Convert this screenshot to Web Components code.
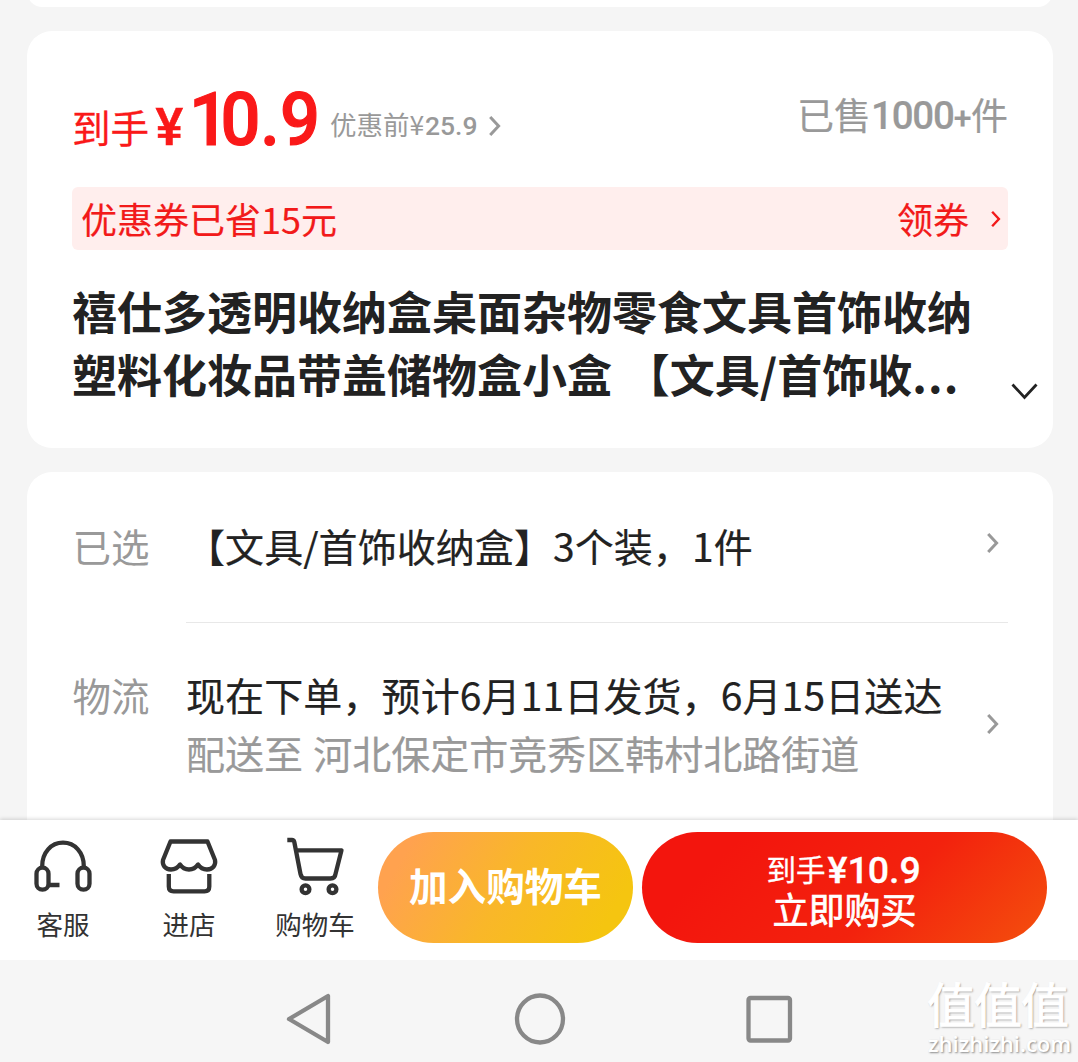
<!DOCTYPE html>
<html lang="zh-CN">
<head>
<meta charset="utf-8">
<title>商品详情</title>
<style>
html,body{margin:0;padding:0}
body{width:1078px;height:1062px;overflow:hidden;background:#f5f5f5;font-family:"Noto Sans CJK SC","Noto Sans",sans-serif;color:#222}
</style>
</head>
<body>
<product-page></product-page>
<script>
const define=(name,html)=>{
  const t=document.createElement('template');
  t.innerHTML=html;
  customElements.define(name,class extends HTMLElement{
    constructor(){super();this.attachShadow({mode:'open'}).append(t.content.cloneNode(true));}
  });
};

define('chevron-icon',`<style>
:host{display:block;width:12px;height:20px;color:#999}
svg{display:block;width:100%;height:100%;overflow:visible}
</style><svg viewBox="0 0 12 20" fill="none" stroke="currentColor" stroke-width="3"><path d="M1.2 1 9.600 10 1.200 19"/></svg>`);

define('info-card',`<style>
:host{display:block;box-sizing:border-box;background:#fff;border-radius:25px;margin:0 25px 0 27px;padding:0 45px}
</style><slot></slot>`);

define('price-row',`<style>
:host{display:flex;height:156px;align-items:flex-start;white-space:nowrap;color:#fa1919}
span{display:block;flex:none}
.label{font-size:38.5px;line-height:50px;margin-top:70px;width:83.500px;-webkit-text-stroke:.3px}
.n{font-family:Roboto,sans-serif}
.yen{font-size:52px;line-height:60px;font-weight:500;margin-top:67px;width:33.500px;-webkit-text-stroke:.6px}
.big{font-size:74px;line-height:80px;font-weight:500;margin-top:49px;width:141px;transform:scaleX(.95);transform-origin:0 0;-webkit-text-stroke:1.200px}
.big i{font-style:normal;letter-spacing:-9px}
.was{font-size:26.5px;line-height:40px;color:#999;margin-top:73px;width:95px}
.wasn{font-size:26.500px;line-height:40px;color:#999;font-weight:500;margin-top:75px;width:64px}
chevron-icon{margin-top:85px}
.sold{display:flex;margin-left:auto;color:#999;font-size:37px;line-height:50px;margin-top:58px;-webkit-text-stroke:.2px}
.sold b{font-family:Roboto,sans-serif;font-size:38.500px;font-weight:500;margin-top:2px;letter-spacing:-1.2px}
.sold b i{font-style:normal;font-size:32px;letter-spacing:-.5px}
</style>
<span class="label">到手</span><span class="n yen">¥</span><span class="n big"><i>1</i>0.9</span>
<span class="was">优惠前¥</span><span class="n wasn">25.9</span><chevron-icon></chevron-icon>
<div class="sold"><span>已售</span><b>1000<i>+</i></b><span>件</span></div>`);

define('coupon-banner',`<style>
:host{display:flex;align-items:center;box-sizing:border-box;height:63px;border-radius:6px;background:#ffeeed;color:#f21a1a;font-size:36px;line-height:60px;padding:0 7px 0 9px;-webkit-text-stroke:.2px}
.get{margin-left:auto;width:94px}
chevron-icon{color:#f21a1a;width:10px;height:16px}
.save,.get{margin-top:-2px}
</style><span class="save">优惠券已省15元</span><span class="get">领券</span><chevron-icon></chevron-icon>`);

define('product-title',`<style>
:host{display:flex;height:198px;white-space:nowrap}
.t{font-size:45px;line-height:63px;font-weight:700;padding-top:28.5px;width:939px;flex:none;word-spacing:2.500px}
.t i{font-style:normal;letter-spacing:1.200px}
svg{margin-top:133px;width:28px;height:17px;flex:none}
</style><div class="t">禧仕多透明收纳盒桌面杂物零食文具首饰收纳<br>塑料化妆品带盖储物盒小盒 【文具/首饰收<i>...</i></div>
<svg viewBox="0 0 28 17" fill="none" stroke="#222" stroke-width="2.8"><path d="M1.5 1.5 13.5 14.5 25.5 1.5"/></svg>`);

define('detail-row',`<style>
:host{display:flex;align-items:flex-start;white-space:nowrap;font-size:39px;line-height:58px}
.k{color:#999;font-size:38.5px;box-sizing:border-box;width:114px;padding-left:.5px}
.v{flex:1;box-sizing:border-box;-webkit-text-stroke:.2px}
chevron-icon{margin:var(--cy) 9.500px 0 0}
</style><div class="k"><slot name="label"></slot></div><div class="v"><slot></slot></div><chevron-icon></chevron-icon>`);

define('tool-item',`<style>
:host{display:flex;flex-direction:column;align-items:center;width:126px;font-size:26.5px;line-height:36px;color:#333}
::slotted(svg){display:block;width:64px;height:64px;fill:none;stroke:#333;stroke-width:4.3;stroke-linejoin:round;stroke-linecap:butt;margin-bottom:10px}
</style><slot name="icon"></slot><span><slot></slot></span>`);

define('pill-button',`<style>
:host{display:flex;flex-direction:column;align-items:center;box-sizing:border-box;height:111px;border-radius:56px;color:#fff;white-space:nowrap}
</style><slot></slot>`);

define('action-bar',`<style>
:host{display:flex;position:relative;box-sizing:border-box;height:140px;background:#fff;box-shadow:0 -1px 4px rgba(0,0,0,.16);padding-top:12px}
.cart{width:255px;background:linear-gradient(120deg,#ffa24f 12%,#f9b729 50%,#f5c510 88%);font-size:38.6px;line-height:56px;font-weight:700;padding-top:24px}
.buy{width:405px;margin-left:9px;background:linear-gradient(135deg,#f3150d 20%,#f3220d 60%,#f4500d 100%);font-size:36px;font-weight:400}
.l1{display:flex;height:58px;width:156px;font-size:29.5px;line-height:50px;padding-top:11px;box-sizing:border-box;-webkit-text-stroke:.3px #fff}
.l1 b{font-family:Roboto,sans-serif;font-size:37.5px;font-weight:500;margin-top:2px;margin-left:2px}
.l1 i{font-style:normal;letter-spacing:-1px}
.l2{line-height:40px;-webkit-text-stroke:.7px #fff;margin-top:-2px}
</style>
<tool-item><svg slot="icon" viewBox="0 0 64 64"><g transform="translate(0 7.700)"><path d="M11.2 26.500C11.2 13 20 3 32 3s20.8 10 20.8 23.500"/><rect x="5.5" y="28" width="12" height="22" rx="6"/><rect x="46.5" y="28" width="12" height="22" rx="6"/><path d="M17.5 45.3h11" stroke-width="4.5"/></g></svg>客服</tool-item>
<tool-item><svg slot="icon" viewBox="0 0 64 64"><path d="M13.5 1.5h37L58 20c1 5-2 9.500-8 9.500-4 0-7-2-9-5-2 3-5 5-9 5s-7-2-9-5c-2 3-5 5-9 5-6 0-9-4.500-8-9.500Z" transform="translate(0 8)"/><path d="M11.800 42v12.500q0 4.800 4.800 4.800H47.500q4.800 0 4.800-4.800V42"/></svg>进店</tool-item>
<tool-item><svg slot="icon" viewBox="0 0 64 64"><path d="M4.300 8h4.700q1.800 0 2.300 2L17.500 42q.9 4.500 5 4.500H47.500q4.500 0 5-4.500L58.500 18.300H13"/><circle cx="22.500" cy="57.300" r="3.900"/><circle cx="49.500" cy="57.300" r="3.900"/></svg>购物车</tool-item>
<pill-button class="cart">加入购物车</pill-button>
<pill-button class="buy"><div class="l1">到手<b>¥<i>1</i>0.9</b></div><div class="l2">立即购买</div></pill-button>`);

define('system-nav',`<style>
:host{display:flex;position:relative;height:102px;background:#f6f6f6;align-items:flex-start}
svg{display:block;fill:none;stroke:#888;stroke-width:4.3;stroke-linejoin:round}
.mark{position:absolute;left:927px;top:15px;width:150px;color:#fff;text-shadow:1px 1px 2px #888}
.cn{font-size:48px;line-height:54px;font-weight:400;-webkit-text-stroke:1px #fff;letter-spacing:-1px;white-space:nowrap}
.en{font-family:"Open Sans",sans-serif;font-weight:600;font-size:22px;line-height:26px;margin-top:1px;padding-left:1px;white-space:nowrap}
</style>
<svg width="1078" height="102" viewBox="0 0 1078 102"><path d="M328 36v46L289 59Z"/><ellipse cx="540" cy="59" rx="23" ry="23.500"/><rect x="748.500" y="38" width="41.500" height="42.500" rx="2"/></svg>
<div class="mark"><div class="cn">值值值</div><div class="en">zhizhizhi.com</div></div>`);

define('product-page',`<style>
:host{display:flex;flex-direction:column;width:1078px;height:1062px;overflow:hidden;background:#f5f5f5}
.prev{height:31px;flex:none;margin-top:-24px;margin-bottom:24px}
.main{height:417px;flex:none;margin-bottom:24px}
.detail{height:348px;flex:none;border-bottom-left-radius:0;border-bottom-right-radius:0}
action-bar,system-nav{flex:none}
.r1{height:150px;padding-top:44px;box-sizing:border-box;--cy:17px;letter-spacing:.07px}
.line{height:1px;background:#e8e8e8;margin-left:114px}
.r2{padding-top:42px;--cy:49px}
.eta{letter-spacing:.12px}
.sub{color:#999;word-spacing:1.500px}
</style>
<info-card class="prev"></info-card>
<info-card class="main"><price-row></price-row><coupon-banner></coupon-banner><product-title></product-title></info-card>
<info-card class="detail">
<detail-row class="r1"><span slot="label">已选</span>【文具/首饰收纳盒】3个装，1件</detail-row>
<div class="line"></div>
<detail-row class="r2"><span slot="label">物流</span><div class="eta">现在下单，预计6月11日发货，6月15日送达</div><div class="sub">配送至 河北保定市竞秀区韩村北路街道</div></detail-row>
</info-card>
<action-bar></action-bar>
<system-nav></system-nav>`);
</script>
</body>
</html>
